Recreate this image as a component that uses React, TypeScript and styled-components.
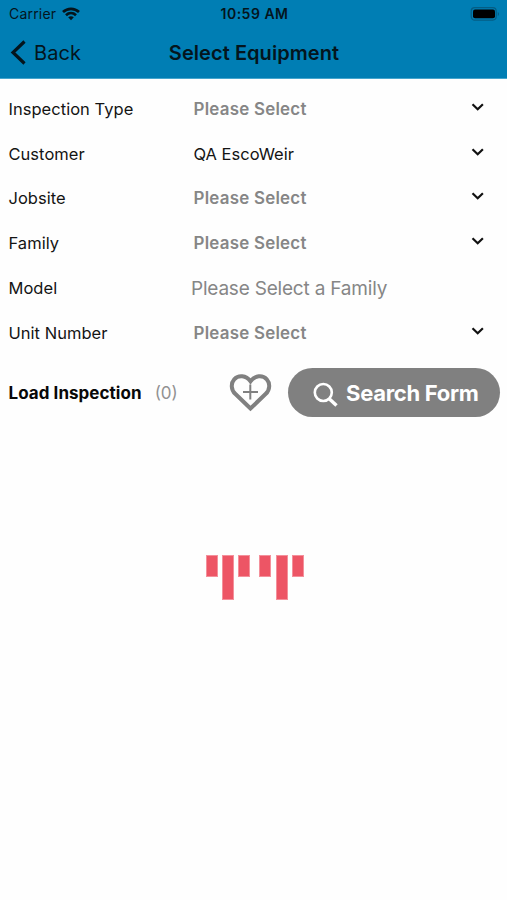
import React from "react";
import styled, { createGlobalStyle } from "styled-components";

const GlobalStyle = createGlobalStyle`
  * { box-sizing: border-box; }
  body { margin: 0; background: #fefefe; font-family: Inter, "Liberation Sans", sans-serif; }
`;

const Screen = styled.div`
  width: 507px;
  height: 900px;
  overflow: hidden;
  display: flex;
  flex-direction: column;
  color: #141414;
`;

const Header = styled.header`
  height: 79px;
  flex: none;
  background: #007eb4;
  border-bottom: 1px solid #45a5cd;
  color: #04151d;
`;

const StatusBar = styled.div`
  height: 27px;
  display: grid;
  grid-template-columns: 1fr auto 1fr;
  align-items: center;
  padding: 0 7px 0 9px;
`;

const Carrier = styled.div`
  display: flex;
  align-items: center;
  gap: 6px;
  font-size: 14px;
  letter-spacing: 0.2px;
`;

const Clock = styled.div`
  font-size: 14px;
  font-weight: 600;
  letter-spacing: 0.5px;
`;

const Battery = styled.svg`
  justify-self: end;
`;

const NavBar = styled.nav`
  height: 51px;
  display: grid;
  grid-template-columns: 1fr auto 1fr;
  align-items: center;
  padding: 0 10px;
`;

const BackButton = styled.button`
  display: flex;
  align-items: center;
  gap: 6px;
  padding: 0;
  border: 0;
  background: none;
  color: inherit;
  font: 400 20px Inter, sans-serif;
  letter-spacing: 0.1px;
`;

const Title = styled.h1`
  margin: 0 0 0 1px;
  font-size: 20px;
  font-weight: 600;
  letter-spacing: 0.06px;
`;

const Form = styled.main`
  padding: 7.5px 20px 0 8.5px;
`;

const Row = styled.div`
  height: 44.8px;
  display: grid;
  grid-template-columns: 185.5px 1fr 16px;
  align-items: center;
`;

const Label = styled.label`
  font-size: 16.5px;
  letter-spacing: 0.03px;
`;

type Kind = "placeholder" | "value" | "hint";

const spacing: Record<Kind, string> = {
  placeholder: "0.25px",
  value: "0",
  hint: "-0.2px",
};

const Value = styled.span<{ $kind: Kind }>`
  font-size: ${({ $kind }) => ({ hint: "19px", placeholder: "16.9px", value: "16.5px" })[$kind]};
  font-weight: ${({ $kind }) => ($kind === "placeholder" ? 600 : 400)};
  letter-spacing: ${({ $kind }) => spacing[$kind]};
  color: ${({ $kind }) => ($kind === "value" ? "#141414" : "#868686")};
  margin-left: ${({ $kind }) => ($kind === "hint" ? "-3px" : "-0.5px")};
`;

const Chevron = styled.svg`
  margin-top: -4px;
`;

const Actions = styled.section`
  height: 49px;
  margin-top: 13px;
  flex: none;
  display: flex;
  align-items: center;
  padding: 0 7px 0 8.5px;
`;

const LoadLabel = styled.strong`
  font-size: 17px;
  font-weight: 700;
  letter-spacing: 0.05px;
  color: #080808;
`;

const Count = styled.span`
  margin-left: 13px;
  font-size: 17px;
  color: #929292;
`;

const Favorite = styled.button`
  margin-left: auto;
  margin-right: 16px;
  padding: 0;
  border: 0;
  background: none;
  display: flex;
`;

const SearchButton = styled.button`
  width: 212px;
  height: 49px;
  border: 0;
  border-radius: 25px;
  background: #808080;
  color: #fff;
  display: flex;
  align-items: center;
  gap: 8px;
  padding: 0 0 0 25px;
  font: 700 22px Inter, sans-serif;
  letter-spacing: -0.28px;
  white-space: nowrap;

  svg {
    margin-top: 3px;
  }
`;

const Loader = styled.div`
  margin: 138px 0 0 206px;
  display: flex;
  align-items: flex-start;
  gap: 9px;
`;

const Bar = styled.i<{ $tall?: boolean }>`
  width: 12px;
  height: ${({ $tall }) => ($tall ? 45 : 22)}px;
  background: #ed5565;
  border: 1px solid #f4909b;
`;

const Glyph = styled.div`
  display: flex;
  align-items: flex-start;
  gap: 4.2px;
`;

const fields: { label: string; text: string; kind: Kind }[] = [
  { label: "Inspection Type", text: "Please Select", kind: "placeholder" },
  { label: "Customer", text: "QA EscoWeir", kind: "value" },
  { label: "Jobsite", text: "Please Select", kind: "placeholder" },
  { label: "Family", text: "Please Select", kind: "placeholder" },
  { label: "Model", text: "Please Select a Family", kind: "hint" },
  { label: "Unit Number", text: "Please Select", kind: "placeholder" },
];

export default function App() {
  return (
    <Screen>
      <GlobalStyle />
      <Header>
        <StatusBar>
          <Carrier>
            Carrier
            <svg width="18" height="14" viewBox="0 0 18 14" fill="none" stroke="#05141b" strokeWidth="2.7">
              <path d="M1 5C5.5.7 12.5.7 17 5" />
              <path d="M4 8.2c2.9-2.7 7.1-2.7 10 0" />
              <path d="M6.2 10.3c1.7-1.5 3.9-1.5 5.6 0L9 13.2z" fill="#05141b" stroke="none" />
            </svg>
          </Carrier>
          <Clock>10:59 AM</Clock>
          <Battery width="30" height="14" viewBox="0 0 30 14">
            <rect x="1.2" y="0.7" width="25" height="12.4" rx="3.5" fill="none" stroke="#045d84" strokeWidth="1.2" />
            <rect x="3" y="2.5" width="22" height="8.8" rx="2" fill="#000" />
            <path d="M27.8 5v4c1.6-.6 1.6-3.4 0-4z" fill="#045d84" />
          </Battery>
        </StatusBar>
        <NavBar>
          <BackButton>
            <svg width="18" height="26" viewBox="0 0 18 26" fill="none" stroke="#04151d" strokeWidth="3.2">
              <path d="M14.5 1.5 3 12.5l11.5 11" />
            </svg>
            Back
          </BackButton>
          <Title>Select Equipment</Title>
        </NavBar>
      </Header>
      <Form>
        {fields.map((f) => (
          <Row key={f.label}>
            <Label>{f.label}</Label>
            <Value $kind={f.kind}>{f.text}</Value>
            {f.kind !== "hint" && (
              <Chevron width="14" height="10" viewBox="0 0 14 10" fill="none" stroke="#111" strokeWidth="2.2">
                <path d="m1.5 2.3 5.2 5 5.2-5" />
              </Chevron>
            )}
          </Row>
        ))}
      </Form>
      <Actions>
        <LoadLabel>Load Inspection</LoadLabel>
        <Count>(0)</Count>
        <Favorite aria-label="Add to favorites">
          <svg width="43" height="40" viewBox="0 0 43 40" fill="none" stroke="#808080">
            <path
              d="M21.5 35.5 6.2 20.8C2 16.8 1.7 10.2 5.2 6.3 9.5 1.7 17 2.3 21.5 8.3 26 2.3 33.5 1.7 37.8 6.3 41.3 10.2 41 16.8 36.8 20.8z"
              strokeWidth="4"
            />
            <path d="M21.3 11.5v15M14 19h15" strokeWidth="2" />
          </svg>
        </Favorite>
        <SearchButton>
          <svg width="25" height="25" viewBox="0 0 25 25" fill="none" stroke="#fff">
            <circle cx="10.3" cy="10.5" r="8.5" strokeWidth="2.6" />
            <path d="m16.5 17 7 6.5" strokeWidth="3.4" />
          </svg>
          Search Form
        </SearchButton>
      </Actions>
      <Loader>
        <Glyph>
          <Bar />
          <Bar $tall />
          <Bar />
        </Glyph>
        <Glyph>
          <Bar />
          <Bar $tall />
          <Bar />
        </Glyph>
      </Loader>
    </Screen>
  );
}
